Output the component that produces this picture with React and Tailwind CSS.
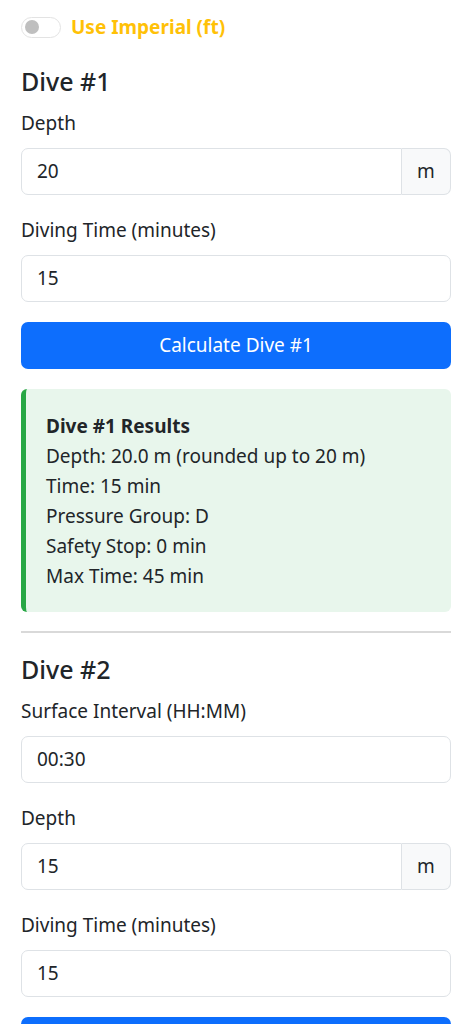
import React from "react";

function Label({ children }) {
  return <label className="block mb-[10px] text-[19px] leading-[30px] text-[#212529]">{children}</label>;
}

function Input({ value, unit }) {
  if (unit) {
    return (
      <div className="flex w-full">
        <div className="flex-1 h-[47px] border border-[#dee2e6] rounded-l-[7px] bg-white px-[15px] flex items-center text-[19px] text-[#212529]">
          {value}
        </div>
        <div className="h-[47px] w-[49px] border border-l-0 border-[#dee2e6] rounded-r-[7px] bg-[#f8f9fa] flex items-center justify-center text-[19px] text-[#212529]">
          {unit}
        </div>
      </div>
    );
  }
  return (
    <div className="w-full h-[47px] border border-[#dee2e6] rounded-[7px] bg-white px-[15px] flex items-center text-[19px] text-[#212529]">
      {value}
    </div>
  );
}

function Button({ children }) {
  return (
    <button className="w-full h-[47px] rounded-[7px] bg-[#0d6efd] text-white text-[19px] flex items-center justify-center">
      {children}
    </button>
  );
}

export default function App() {
  return (
    <div
      className="min-h-screen bg-white px-[21px] pt-[12px] text-[#212529]"
      style={{ fontFamily: '"Noto Sans", "Open Sans", sans-serif' }}
    >
      <div className="flex items-center gap-[10px] h-[30px]">
        <div className="w-[40px] h-[21px] rounded-full border border-[#e3e3e3] bg-white flex items-center px-[3px]">
          <div className="w-[14px] h-[14px] rounded-full bg-[#bfbfbf]" />
        </div>
        <span className="text-[19px] font-bold text-[#ffc107] leading-[30px]">Use Imperial (ft)</span>
      </div>

      <h3 className="mt-[22px] mb-[10px] text-[25px] font-medium leading-[34px]">Dive #1</h3>
      <Label>Depth</Label>
      <Input value="20" unit="m" />
      <div className="h-[20px]" />
      <Label>Diving Time (minutes)</Label>
      <Input value="15" />
      <div className="h-[20px]" />
      <Button>Calculate Dive #1</Button>

      <div className="mt-[20px] rounded-[6px] bg-[#e8f6ec] border-l-[5px] border-[#28a745] pl-[20px] pr-[20px] pt-[22px] pb-[21px] text-[19px] leading-[30px]">
        <div className="font-bold">Dive #1 Results</div>
        <div>Depth: 20.0 m (rounded up to 20 m)</div>
        <div>Time: 15 min</div>
        <div>Pressure Group: D</div>
        <div>Safety Stop: 0 min</div>
        <div>Max Time: 45 min</div>
      </div>

      <div className="mt-[19px] mb-[19px] border-t-2 border-[#d9d9d9]" />

      <h3 className="mb-[10px] text-[25px] font-medium leading-[34px]">Dive #2</h3>
      <Label>Surface Interval (HH:MM)</Label>
      <Input value="00:30" />
      <div className="h-[20px]" />
      <Label>Depth</Label>
      <Input value="15" unit="m" />
      <div className="h-[20px]" />
      <Label>Diving Time (minutes)</Label>
      <Input value="15" />
      <div className="h-[20px]" />
      <Button>Calculate Dive #2</Button>
      <div className="h-[40px]" />
    </div>
  );
}
